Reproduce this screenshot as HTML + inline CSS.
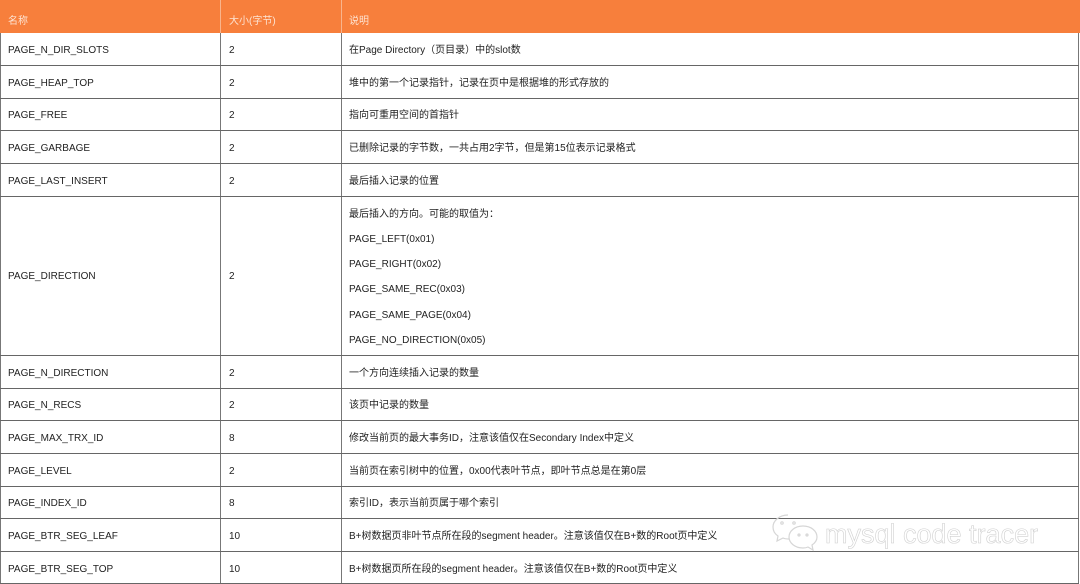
<!DOCTYPE html><html><head><meta charset="utf-8"><style>
body{margin:0;width:1080px;height:584px;background:#fff;position:relative;overflow:hidden;font-family:"Liberation Sans","Noto Sans CJK SC",sans-serif;font-size:10px;color:#222}
.h{position:absolute;left:0;top:0;width:1080px;height:33px;background:#f77f3c}
.h span{position:absolute;top:12px;color:#fde3d2;font-size:10px}
.hs{position:absolute;top:0;width:1px;height:33px;background:#f9b48c}
.hl{position:absolute;left:0;width:1079px;height:1px;background:#666}
.vl{position:absolute;top:33px;width:1px;height:551px;background:#777}
.t{position:absolute;white-space:nowrap;line-height:12px;margin-top:2px}
</style></head><body>
<div class="h"><span style="left:8px">名称</span><span style="left:229px">大小(字节)</span><span style="left:349px">说明</span></div>
<div class="hs" style="left:220px"></div><div class="hs" style="left:341px"></div>
<div class="vl" style="left:0"></div>
<div class="vl" style="left:220px"></div>
<div class="vl" style="left:341px"></div>
<div class="vl" style="left:1078px"></div>
<div class="hl" style="top:65px"></div><div class="hl" style="top:98px"></div><div class="hl" style="top:130px"></div><div class="hl" style="top:163px"></div><div class="hl" style="top:196px"></div><div class="hl" style="top:355px"></div><div class="hl" style="top:388px"></div><div class="hl" style="top:420px"></div><div class="hl" style="top:453px"></div><div class="hl" style="top:486px"></div><div class="hl" style="top:518px"></div><div class="hl" style="top:551px"></div><div class="hl" style="top:583px"></div>

<div class="t" style="left:8px;top:43px">PAGE_N_DIR_SLOTS</div><div class="t" style="left:229px;top:43px">2</div><div class="t" style="left:349px;top:43px">在Page Directory（页目录）中的slot数</div>
<div class="t" style="left:8px;top:76px">PAGE_HEAP_TOP</div><div class="t" style="left:229px;top:76px">2</div><div class="t" style="left:349px;top:76px">堆中的第一个记录指针，记录在页中是根据堆的形式存放的</div>
<div class="t" style="left:8px;top:108px">PAGE_FREE</div><div class="t" style="left:229px;top:108px">2</div><div class="t" style="left:349px;top:108px">指向可重用空间的首指针</div>
<div class="t" style="left:8px;top:141px">PAGE_GARBAGE</div><div class="t" style="left:229px;top:141px">2</div><div class="t" style="left:349px;top:141px">已删除记录的字节数，一共占用2字节，但是第15位表示记录格式</div>
<div class="t" style="left:8px;top:174px">PAGE_LAST_INSERT</div><div class="t" style="left:229px;top:174px">2</div><div class="t" style="left:349px;top:174px">最后插入记录的位置</div>
<div class="t" style="left:8px;top:269px">PAGE_DIRECTION</div><div class="t" style="left:229px;top:269px">2</div>
<div class="t" style="left:349px;top:207px">最后插入的方向。可能的取值为：</div>
<div class="t" style="left:349px;top:232px">PAGE_LEFT(0x01)</div>
<div class="t" style="left:349px;top:257px">PAGE_RIGHT(0x02)</div>
<div class="t" style="left:349px;top:282px">PAGE_SAME_REC(0x03)</div>
<div class="t" style="left:349px;top:308px">PAGE_SAME_PAGE(0x04)</div>
<div class="t" style="left:349px;top:333px">PAGE_NO_DIRECTION(0x05)</div>
<div class="t" style="left:8px;top:366px">PAGE_N_DIRECTION</div><div class="t" style="left:229px;top:366px">2</div><div class="t" style="left:349px;top:366px">一个方向连续插入记录的数量</div>
<div class="t" style="left:8px;top:398px">PAGE_N_RECS</div><div class="t" style="left:229px;top:398px">2</div><div class="t" style="left:349px;top:398px">该页中记录的数量</div>
<div class="t" style="left:8px;top:431px">PAGE_MAX_TRX_ID</div><div class="t" style="left:229px;top:431px">8</div><div class="t" style="left:349px;top:431px">修改当前页的最大事务ID，注意该值仅在Secondary Index中定义</div>
<div class="t" style="left:8px;top:464px">PAGE_LEVEL</div><div class="t" style="left:229px;top:464px">2</div><div class="t" style="left:349px;top:464px">当前页在索引树中的位置，0x00代表叶节点，即叶节点总是在第0层</div>
<div class="t" style="left:8px;top:496px">PAGE_INDEX_ID</div><div class="t" style="left:229px;top:496px">8</div><div class="t" style="left:349px;top:496px">索引ID，表示当前页属于哪个索引</div>
<div class="t" style="left:8px;top:529px">PAGE_BTR_SEG_LEAF</div><div class="t" style="left:229px;top:529px">10</div><div class="t" style="left:349px;top:529px">B+树数据页非叶节点所在段的segment header。注意该值仅在B+数的Root页中定义</div>
<div class="t" style="left:8px;top:562px">PAGE_BTR_SEG_TOP</div><div class="t" style="left:229px;top:562px">10</div><div class="t" style="left:349px;top:562px">B+树数据页所在段的segment header。注意该值仅在B+数的Root页中定义</div>

<svg style="position:absolute;left:770px;top:512px" width="50" height="44" viewBox="0 0 50 44" fill="none" stroke="#d6d6d6" stroke-width="1.2">
<path d="M18 3C9 3 3 9 3 15c0 4 2 7 5 9l-1 5 6-3c2 1 4 1 6 1"/>
<path d="M33 14c-8 0-14 5-14 11s6 11 14 11c2 0 3 0 5-1l5 3-1-5c3-2 5-5 5-8 0-6-6-11-14-11z"/>
<circle cx="12" cy="11" r="1.2"/><circle cx="24" cy="11" r="1.2"/><circle cx="29" cy="23" r="1"/><circle cx="37" cy="23" r="1"/>
</svg>
<div class="t" style="left:825px;top:517px;font-size:27px;line-height:30px;color:#fff;-webkit-text-stroke:0.6px #d0d0d0">mysql code tracer</div>
</body></html>
